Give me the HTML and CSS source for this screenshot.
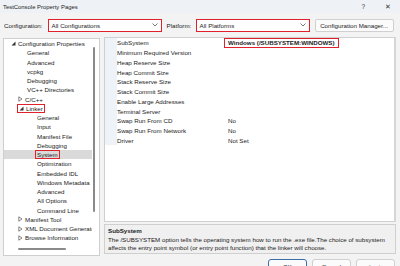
FILE: index.html
```html
<!DOCTYPE html>
<html lang="en">
<head>
    <meta charset="UTF-8">
    <title>TestConsole Property Pages</title>
    <link rel="stylesheet" href="styles.css">
</head>
<body>

    <!-- Fönstrets titelrad -->
    <div class="title-bar">
        <span class="title">TestConsole Property Pages</span>
        <span class="title-btn help">?</span>
        <span class="title-btn close">✕</span>
    </div>

    <!-- Konfiguration / plattform -->
    <div class="config-bar">
        <span class="config-label">Configuration:</span>
        <div class="dropdown marked">
            <span>All Configurations</span>
            <svg class="chevron" width="6" height="4" viewBox="0 0 6 4"><path d="M0.5 0.5 L3 3 L5.5 0.5" fill="none" stroke="#555" stroke-width="0.8"/></svg>
        </div>
        <span class="config-label platform">Platform:</span>
        <div class="dropdown marked">
            <span>All Platforms</span>
            <svg class="chevron" width="6" height="4" viewBox="0 0 6 4"><path d="M0.5 0.5 L3 3 L5.5 0.5" fill="none" stroke="#555" stroke-width="0.8"/></svg>
        </div>
        <button class="manager-button">Configuration Manager...</button>
    </div>

    <div class="main">
        <!-- Trädet till vänster -->
        <div class="tree">
            <div class="node lvl0"><svg class="exp" width="5" height="5" viewBox="0 0 5 5"><path d="M4.5 0.5 L4.5 4.5 L0.5 4.5 Z" fill="#333"/></svg>Configuration Properties</div>
            <div class="node lvl1">General</div>
            <div class="node lvl1">Advanced</div>
            <div class="node lvl1">vcpkg</div>
            <div class="node lvl1">Debugging</div>
            <div class="node lvl1">VC++ Directories</div>
            <div class="node lvl1 has-exp"><svg class="exp" width="5" height="6" viewBox="0 0 5 6"><path d="M0.8 0.8 L4 3 L0.8 5.2 Z" fill="none" stroke="#555" stroke-width="0.7"/></svg>C/C++</div>
            <div class="node lvl1 has-exp"><span class="marker"><svg class="exp" width="5" height="5" viewBox="0 0 5 5"><path d="M4.5 0.5 L4.5 4.5 L0.5 4.5 Z" fill="#333"/></svg>Linker</span></div>
            <div class="node lvl2">General</div>
            <div class="node lvl2">Input</div>
            <div class="node lvl2">Manifest File</div>
            <div class="node lvl2">Debugging</div>
            <div class="node lvl2 selected"><span class="marker">System</span></div>
            <div class="node lvl2">Optimization</div>
            <div class="node lvl2">Embedded IDL</div>
            <div class="node lvl2">Windows Metadata</div>
            <div class="node lvl2">Advanced</div>
            <div class="node lvl2">All Options</div>
            <div class="node lvl2">Command Line</div>
            <div class="node lvl1 has-exp"><svg class="exp" width="5" height="6" viewBox="0 0 5 6"><path d="M0.8 0.8 L4 3 L0.8 5.2 Z" fill="none" stroke="#555" stroke-width="0.7"/></svg>Manifest Tool</div>
            <div class="node lvl1 has-exp"><svg class="exp" width="5" height="6" viewBox="0 0 5 6"><path d="M0.8 0.8 L4 3 L0.8 5.2 Z" fill="none" stroke="#555" stroke-width="0.7"/></svg>XML Document Generator</div>
            <div class="node lvl1 has-exp"><svg class="exp" width="5" height="6" viewBox="0 0 5 6"><path d="M0.8 0.8 L4 3 L0.8 5.2 Z" fill="none" stroke="#555" stroke-width="0.7"/></svg>Browse Information</div>

            <div class="vscroll"></div>
            <div class="hscroll"></div>
        </div>

        <div class="right">
            <!-- Egenskapslistan -->
            <div class="grid">
                <div class="row"><span class="gutter"></span><span class="name">SubSystem</span><span class="value"><b class="marker">Windows (/SUBSYSTEM:WINDOWS)</b></span></div>
                <div class="row"><span class="gutter"></span><span class="name">Minimum Required Version</span><span class="value"></span></div>
                <div class="row"><span class="gutter"></span><span class="name">Heap Reserve Size</span><span class="value"></span></div>
                <div class="row"><span class="gutter"></span><span class="name">Heap Commit Size</span><span class="value"></span></div>
                <div class="row"><span class="gutter"></span><span class="name">Stack Reserve Size</span><span class="value"></span></div>
                <div class="row"><span class="gutter"></span><span class="name">Stack Commit Size</span><span class="value"></span></div>
                <div class="row"><span class="gutter"></span><span class="name">Enable Large Addresses</span><span class="value"></span></div>
                <div class="row"><span class="gutter"></span><span class="name">Terminal Server</span><span class="value"></span></div>
                <div class="row"><span class="gutter"></span><span class="name">Swap Run From CD</span><span class="value">No</span></div>
                <div class="row"><span class="gutter"></span><span class="name">Swap Run From Network</span><span class="value">No</span></div>
                <div class="row"><span class="gutter"></span><span class="name">Driver</span><span class="value">Not Set</span></div>
            </div>

            <!-- Beskrivning -->
            <div class="description">
                <div class="desc-title">SubSystem</div>
                <div class="desc-text">The /SUBSYSTEM option tells the operating system how to run the .exe file.The choice of subsystem affects the entry point symbol (or entry point function) that the linker will choose.</div>
            </div>
        </div>
    </div>

    <div class="buttons">
        <button class="dlg-button default">OK</button>
        <button class="dlg-button">Cancel</button>
        <button class="dlg-button disabled">Apply</button>
    </div>

</body>
</html>
```

FILE: styles.css
```css
body {
    font-family: "Liberation Sans", Arial, sans-serif;
    font-size: 6.2px;
    margin: 0;
    padding: 0;
    width: 400px;
    height: 266px;
    overflow: hidden;
    background-color: #f3f3f3;
    color: #1b1b1b;
}

.title-bar {
    display: flex;
    align-items: center;
    height: 13px;
    padding: 0 3px;
    background-color: #eef2f7;
}

.title {
    flex: 1;
    font-size: 5.9px;
}

.title-btn {
    font-size: 6.5px;
    color: #333;
}

.help {
    margin-right: 20px;
}

.close {
    margin-right: 6px;
    font-size: 7px;
}

.config-bar {
    display: flex;
    align-items: center;
    height: 24px;
    padding-left: 4px;
}

.config-label {
    margin-right: 6px;
}

.config-label.platform {
    margin-left: 6px;
    margin-right: 0;
    width: 30px;
}

.dropdown {
    display: flex;
    align-items: center;
    justify-content: space-between;
    width: 112px;
    height: 11px;
    box-sizing: border-box;
    padding: 0 3px;
    background-color: #fff;
}

.marked {
    outline: 1px solid #e0202a;
}

.manager-button {
    margin-left: 6px;
    width: 79px;
    height: 13px;
    padding: 0;
    font-family: inherit;
    font-size: 6.2px;
    color: #1b1b1b;
    background-color: #fbfbfb;
    border: 1px solid #d0d0d0;
    border-radius: 2px;
}

.main {
    display: flex;
    gap: 4px;
    padding: 0 4px 0 3px;
    height: 219px;
}

.tree {
    position: relative;
    width: 97px;
    margin-top: 1px;
    box-sizing: border-box;
    background-color: #fff;
    border: 1px solid #cfcfcf;
    overflow: hidden;
}

.node {
    display: flex;
    align-items: center;
    box-sizing: border-box;
    height: 9.26px;
    width: 88px;
    white-space: nowrap;
    overflow: hidden;
}

.node .exp {
    flex-shrink: 0;
    margin-right: 2px;
}

.lvl0 {
    padding-left: 7px;
}

.lvl1 {
    padding-left: 23px;
}

.lvl1.has-exp {
    padding-left: 14px;
}

.lvl1.has-exp .marker {
    margin-left: -1px;
}

.lvl2 {
    padding-left: 33px;
}

.node .marker {
    display: flex;
    align-items: center;
    outline: 1px solid #e0202a;
    outline-offset: -1px;
    padding: 0 2px;
    margin-left: -2px;
    height: 9px;
}

.selected {
    background-color: #dadada;
}

.vscroll {
    position: absolute;
    left: 89px;
    top: 8px;
    width: 2px;
    height: 165px;
    background-color: #8a8a8a;
    border-radius: 1px;
}

.hscroll {
    position: absolute;
    left: 14px;
    top: 209px;
    width: 48px;
    height: 1.5px;
    background-color: #8a8a8a;
    border-radius: 1px;
}

.right {
    display: flex;
    flex-direction: column;
    width: 292px;
}

.grid {
    height: 185px;
    box-sizing: border-box;
    background-color: #fff;
    border: 1px solid #cfcfcf;
    border-right: 2px solid #d6d6d6;
}

.row {
    display: flex;
    height: 9.74px;
    align-items: stretch;
}

.gutter {
    width: 12px;
    background-color: #eef3fa;
}

.name {
    display: flex;
    align-items: center;
    width: 107px;
}

.value {
    display: flex;
    align-items: center;
    padding-left: 4px;
}

.value .marker {
    outline: 1px solid #e0202a;
    margin-left: -3px;
    padding: 0 3px;
    line-height: 8.5px;
}

.description {
    margin-top: 2px;
    height: 30px;
    box-sizing: border-box;
    padding: 1px 3px;
    background-color: #f0f0f0;
    border: 1px solid #cfcfcf;
}

.desc-title {
    font-weight: bold;
    line-height: 9px;
    margin-bottom: 0.5px;
}

.desc-text {
    line-height: 8.5px;
}

.buttons {
    display: flex;
    justify-content: flex-end;
    gap: 5px;
    padding-right: 5px;
    margin-top: 3px;
}

.dlg-button {
    width: 39px;
    height: 14px;
    padding: 0;
    font-family: inherit;
    font-size: 6.2px;
    color: #1b1b1b;
    background-color: #fbfbfb;
    border: 1px solid #d0d0d0;
    border-radius: 3px;
}

.dlg-button.default {
    border-color: #3a6ea5;
}

.dlg-button.disabled {
    color: #a0a0a0;
}
```
